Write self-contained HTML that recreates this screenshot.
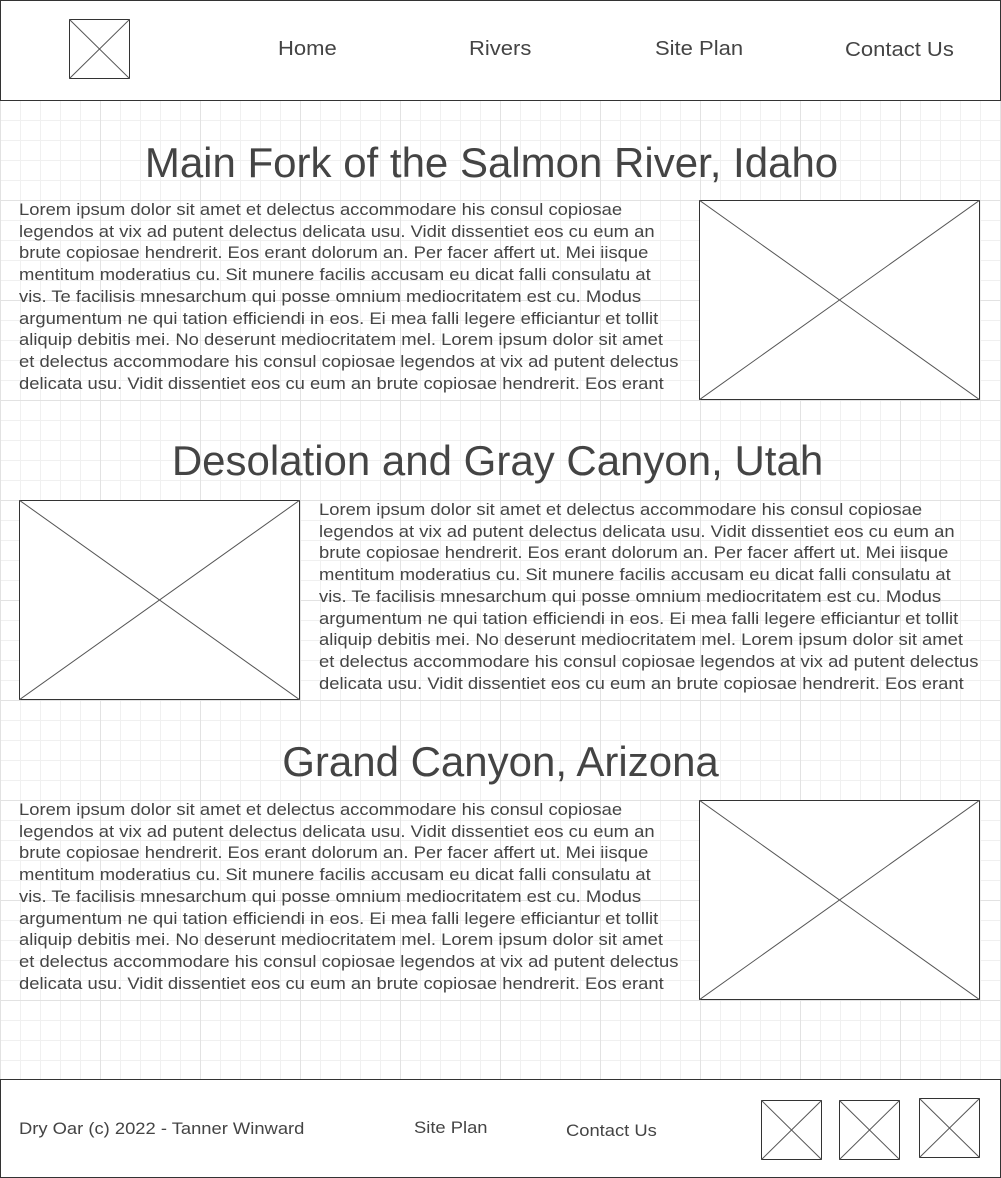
<!DOCTYPE html>
<html><head><meta charset="utf-8"><style>
*{margin:0;padding:0;box-sizing:border-box}
body{width:1001px;height:1178px;position:relative;overflow:hidden;font-family:"Liberation Sans",sans-serif;color:#444;
background-color:#fff;
background-image:linear-gradient(to right,#e2e2e2 1px,transparent 1px),linear-gradient(to bottom,#e2e2e2 1px,transparent 1px),linear-gradient(to right,#f0f0f0 1px,transparent 1px),linear-gradient(to bottom,#f0f0f0 1px,transparent 1px);
background-size:100px 100px,100px 100px,20px 20px,20px 20px;}
.box{position:absolute;background:#fff;border:1px solid #333}
svg.x{position:absolute;background:#fff}
.h{position:absolute;left:0;width:1001px;text-align:center;font-size:42px;color:#444}
.p{position:absolute;font-size:16.4px;line-height:21.7px;color:#444;transform:scaleX(1.122);transform-origin:0 0;white-space:nowrap}
.n{position:absolute;font-size:20px;color:#444;transform:scaleX(1.1);transform-origin:0 0}
.f{position:absolute;font-size:17px;color:#444;transform:scaleX(1.08);transform-origin:0 0}
</style></head><body>
<div class="box" style="left:0;top:0;width:1001px;height:101px"></div>
<svg class="x" style="left:69px;top:19px" width="61" height="60"><rect x="0.5" y="0.5" width="60" height="59" fill="none" stroke="#333"/><path d="M0 0L61 60M61 0L0 60" stroke="#555"/></svg>
<div class="n" style="left:278px;top:38px">Home</div>
<div class="n" style="left:469px;top:38px">Rivers</div>
<div class="n" style="left:655px;top:38px">Site Plan</div>
<div class="n" style="left:845px;top:39px">Contact Us</div>

<div class="h" style="top:139px;left:-9px">Main Fork of the Salmon River, Idaho</div>
<div class="p" style="left:19px;top:200px">Lorem ipsum dolor sit amet et delectus accommodare his consul copiosae<br>legendos at vix ad putent delectus delicata usu. Vidit dissentiet eos cu eum an<br>brute copiosae hendrerit. Eos erant dolorum an. Per facer affert ut. Mei iisque<br>mentitum moderatius cu. Sit munere facilis accusam eu dicat falli consulatu at<br>vis. Te facilisis mnesarchum qui posse omnium mediocritatem est cu. Modus<br>argumentum ne qui tation efficiendi in eos. Ei mea falli legere efficiantur et tollit<br>aliquip debitis mei. No deserunt mediocritatem mel. Lorem ipsum dolor sit amet<br>et delectus accommodare his consul copiosae legendos at vix ad putent delectus<br>delicata usu. Vidit dissentiet eos cu eum an brute copiosae hendrerit. Eos erant</div>
<svg class="x" style="left:699px;top:200px" width="281" height="200"><rect x="0.5" y="0.5" width="280" height="199" fill="none" stroke="#333"/><path d="M0 0L281 200M281 0L0 200" stroke="#555"/></svg>

<div class="h" style="top:437px;left:-3px">Desolation and Gray Canyon, Utah</div>
<svg class="x" style="left:19px;top:500px" width="281" height="200"><rect x="0.5" y="0.5" width="280" height="199" fill="none" stroke="#333"/><path d="M0 0L281 200M281 0L0 200" stroke="#555"/></svg>
<div class="p" style="left:319px;top:500px">Lorem ipsum dolor sit amet et delectus accommodare his consul copiosae<br>legendos at vix ad putent delectus delicata usu. Vidit dissentiet eos cu eum an<br>brute copiosae hendrerit. Eos erant dolorum an. Per facer affert ut. Mei iisque<br>mentitum moderatius cu. Sit munere facilis accusam eu dicat falli consulatu at<br>vis. Te facilisis mnesarchum qui posse omnium mediocritatem est cu. Modus<br>argumentum ne qui tation efficiendi in eos. Ei mea falli legere efficiantur et tollit<br>aliquip debitis mei. No deserunt mediocritatem mel. Lorem ipsum dolor sit amet<br>et delectus accommodare his consul copiosae legendos at vix ad putent delectus<br>delicata usu. Vidit dissentiet eos cu eum an brute copiosae hendrerit. Eos erant</div>

<div class="h" style="top:738px">Grand Canyon, Arizona</div>
<div class="p" style="left:19px;top:800px">Lorem ipsum dolor sit amet et delectus accommodare his consul copiosae<br>legendos at vix ad putent delectus delicata usu. Vidit dissentiet eos cu eum an<br>brute copiosae hendrerit. Eos erant dolorum an. Per facer affert ut. Mei iisque<br>mentitum moderatius cu. Sit munere facilis accusam eu dicat falli consulatu at<br>vis. Te facilisis mnesarchum qui posse omnium mediocritatem est cu. Modus<br>argumentum ne qui tation efficiendi in eos. Ei mea falli legere efficiantur et tollit<br>aliquip debitis mei. No deserunt mediocritatem mel. Lorem ipsum dolor sit amet<br>et delectus accommodare his consul copiosae legendos at vix ad putent delectus<br>delicata usu. Vidit dissentiet eos cu eum an brute copiosae hendrerit. Eos erant</div>
<svg class="x" style="left:699px;top:800px" width="281" height="200"><rect x="0.5" y="0.5" width="280" height="199" fill="none" stroke="#333"/><path d="M0 0L281 200M281 0L0 200" stroke="#555"/></svg>

<div class="box" style="left:0;top:1079px;width:1001px;height:99px"></div>
<div class="f" style="left:19px;top:1119px">Dry Oar (c) 2022 - Tanner Winward</div>
<div class="f" style="left:414px;top:1118px">Site Plan</div>
<div class="f" style="left:566px;top:1121px">Contact Us</div>
<svg class="x" style="left:761px;top:1100px" width="61" height="60"><rect x="0.5" y="0.5" width="60" height="59" fill="none" stroke="#333"/><path d="M0 0L61 60M61 0L0 60" stroke="#555"/></svg>
<svg class="x" style="left:839px;top:1100px" width="61" height="60"><rect x="0.5" y="0.5" width="60" height="59" fill="none" stroke="#333"/><path d="M0 0L61 60M61 0L0 60" stroke="#555"/></svg>
<svg class="x" style="left:919px;top:1098px" width="61" height="60"><rect x="0.5" y="0.5" width="60" height="59" fill="none" stroke="#333"/><path d="M0 0L61 60M61 0L0 60" stroke="#555"/></svg>
</body></html>
